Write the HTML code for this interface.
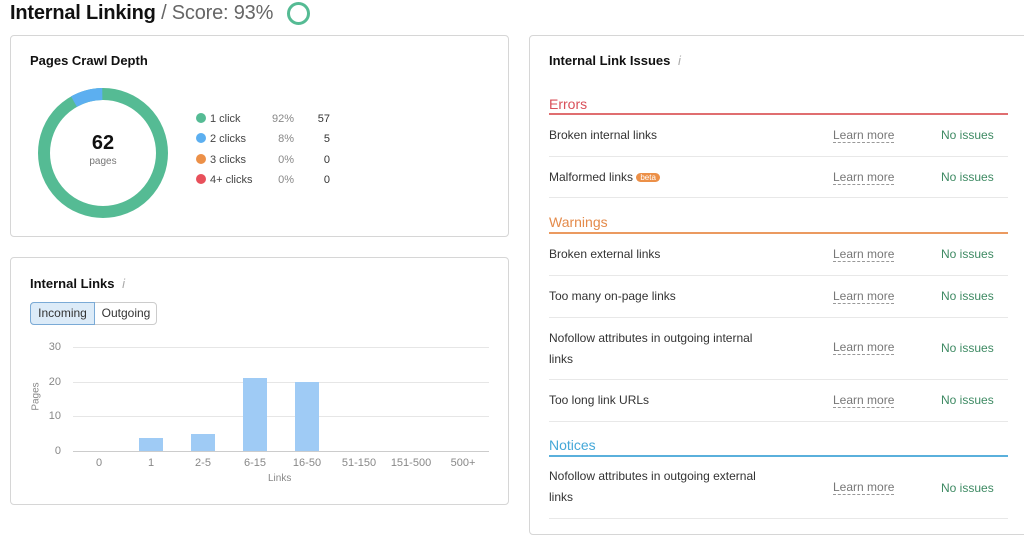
<!DOCTYPE html>
<html><head><meta charset="utf-8"><style>
*{margin:0;padding:0;box-sizing:border-box}
body{width:1024px;height:520px;background:#fff;font-family:"Liberation Sans",sans-serif;color:#222;position:relative;overflow:hidden}
.a{position:absolute;white-space:nowrap}
.card{position:absolute;border:1px solid #d6d6d6;border-radius:4px;background:#fff}
.h{font-weight:bold;font-size:13px;color:#111}
.s{font-size:11px}
.row{position:absolute;left:549px;width:459px;border-bottom:1px solid #e8e8e8;font-size:12px;color:#333}
.lm{position:absolute;left:284px;color:#777;border-bottom:1px dashed #999;line-height:13px}
.ni{position:absolute;left:392px;color:#3e8a63}
.sec{position:absolute;left:549px;width:459px;font-size:14px}
.gl{position:absolute;left:73px;width:416px;height:1px;background:#e6e6e6}
.yl{position:absolute;font-size:11px;color:#888;width:20px;text-align:right;left:41px}
.xl{position:absolute;font-size:11px;color:#888;width:52px;text-align:center;top:457px}
.bar{position:absolute;width:24px;background:#9fcbf5}
</style></head><body>
<div class="a" style="left:10px;top:0px;font-size:20px;line-height:26px;letter-spacing:-0.2px"><b style="color:#111">Internal Linking</b> <span style="color:#666">/ Score: 93%</span></div>
<svg class="a" style="left:286px;top:1px" width="25" height="25"><circle cx="12.5" cy="12.5" r="10" fill="none" stroke="#55bb94" stroke-width="3"/></svg>

<div class="card" style="left:10px;top:35px;width:499px;height:202px"></div>
<div class="a h" style="left:30px;top:53px">Pages Crawl Depth</div>
<svg class="a" style="left:38px;top:88px" width="130" height="130">
<circle cx="65" cy="65" r="59" fill="none" stroke="#55bb94" stroke-width="12"/>
<circle cx="65" cy="65" r="59" fill="none" stroke="#5caff0" stroke-width="12" stroke-dasharray="29.7 400" transform="rotate(-119.5 65 65)"/>
</svg>
<div class="a" style="left:73px;top:132px;width:60px;text-align:center;font-size:20px;font-weight:bold;color:#111">62</div>
<div class="a" style="left:73px;top:156px;width:60px;text-align:center;font-size:10px;color:#777">pages</div>
<div class="a s" style="left:196px;top:109px;line-height:20.3px;color:#444">
<div><span style="display:inline-block;width:10px;height:10px;border-radius:5px;background:#55bb94;vertical-align:-1px;margin-right:4px"></span>1 click</div>
<div><span style="display:inline-block;width:10px;height:10px;border-radius:5px;background:#5caff0;vertical-align:-1px;margin-right:4px"></span>2 clicks</div>
<div><span style="display:inline-block;width:10px;height:10px;border-radius:5px;background:#ec9048;vertical-align:-1px;margin-right:4px"></span>3 clicks</div>
<div><span style="display:inline-block;width:10px;height:10px;border-radius:5px;background:#e8505b;vertical-align:-1px;margin-right:4px"></span>4+ clicks</div>
</div>
<div class="a s" style="left:254px;top:109px;width:40px;text-align:right;line-height:20.3px;color:#888">92%<br>8%<br>0%<br>0%</div>
<div class="a s" style="left:300px;top:109px;width:30px;text-align:right;line-height:20.3px;color:#333">57<br>5<br>0<br>0</div>

<div class="card" style="left:10px;top:257px;width:499px;height:248px"></div>
<div class="a h" style="left:30px;top:276px">Internal Links <span style="color:#aaa;font-weight:normal;font-style:italic;margin-left:4px">i</span></div>
<div class="a" style="left:30px;top:302px;width:127px;height:23px;border:1px solid #ccc;border-radius:4px;font-size:12px">
<div class="a" style="left:-1px;top:-1px;width:65px;height:23px;background:#dcebf8;border:1px solid #7aaad6;border-radius:4px 0 0 4px;line-height:21px;text-align:center;color:#333">Incoming</div>
<div class="a" style="left:64px;top:0;width:62px;line-height:21px;text-align:center;color:#333">Outgoing</div>
</div>
<div class="gl" style="top:347px"></div><div class="gl" style="top:382px"></div><div class="gl" style="top:416px"></div><div class="gl" style="top:451px;background:#ccc"></div>
<div class="yl" style="top:341px">30</div><div class="yl" style="top:376px">20</div><div class="yl" style="top:410px">10</div><div class="yl" style="top:445px">0</div>
<div class="a" style="left:22px;top:391px;font-size:10px;color:#888;transform:rotate(-90deg)">Pages</div>
<div class="bar" style="left:139px;top:438px;height:13px"></div>
<div class="bar" style="left:191px;top:434px;height:17px"></div>
<div class="bar" style="left:243px;top:378px;height:73px"></div>
<div class="bar" style="left:295px;top:382px;height:69px"></div>
<div class="xl" style="left:73px">0</div><div class="xl" style="left:125px">1</div><div class="xl" style="left:177px">2-5</div><div class="xl" style="left:229px">6-15</div><div class="xl" style="left:281px">16-50</div><div class="xl" style="left:333px">51-150</div><div class="xl" style="left:385px">151-500</div><div class="xl" style="left:437px">500+</div>
<div class="a" style="left:268px;top:473px;font-size:10px;color:#888">Links</div>

<div class="card" style="left:529px;top:35px;width:520px;height:500px"></div>
<div class="a h" style="left:549px;top:53px">Internal Link Issues <span style="color:#aaa;font-weight:normal;font-style:italic;margin-left:4px">i</span></div>

<div class="sec" style="top:96px;height:19px;color:#d9505a;border-bottom:2px solid #e06e70">Errors</div>
<div class="row" style="top:115px;height:42px"><span class="a" style="top:13px;left:0">Broken internal links</span><span class="lm" style="top:14px">Learn more</span><span class="ni" style="top:13px">No issues</span></div>
<div class="row" style="top:157px;height:41px"><span class="a" style="top:13px;left:0">Malformed links <span style="background:#ec9048;color:#fff;font-size:8px;border-radius:6px;padding:0 4px;vertical-align:1px">beta</span></span><span class="lm" style="top:14px">Learn more</span><span class="ni" style="top:13px">No issues</span></div>

<div class="sec" style="top:214px;height:20px;color:#e48a4a;border-bottom:2px solid #eb9a60">Warnings</div>
<div class="row" style="top:234px;height:42px"><span class="a" style="top:13px;left:0">Broken external links</span><span class="lm" style="top:14px">Learn more</span><span class="ni" style="top:13px">No issues</span></div>
<div class="row" style="top:276px;height:42px"><span class="a" style="top:13px;left:0">Too many on-page links</span><span class="lm" style="top:14px">Learn more</span><span class="ni" style="top:13px">No issues</span></div>
<div class="row" style="top:318px;height:62px"><span class="a" style="top:10px;left:0;line-height:21px">Nofollow attributes in outgoing internal<br>links</span><span class="lm" style="top:23px">Learn more</span><span class="ni" style="top:23px">No issues</span></div>
<div class="row" style="top:380px;height:42px"><span class="a" style="top:13px;left:0">Too long link URLs</span><span class="lm" style="top:14px">Learn more</span><span class="ni" style="top:13px">No issues</span></div>

<div class="sec" style="top:437px;height:20px;color:#45a8d8;border-bottom:2px solid #5ab0dc">Notices</div>
<div class="row" style="top:457px;height:62px"><span class="a" style="top:9px;left:0;line-height:21px">Nofollow attributes in outgoing external<br>links</span><span class="lm" style="top:24px">Learn more</span><span class="ni" style="top:24px">No issues</span></div>
</body></html>
